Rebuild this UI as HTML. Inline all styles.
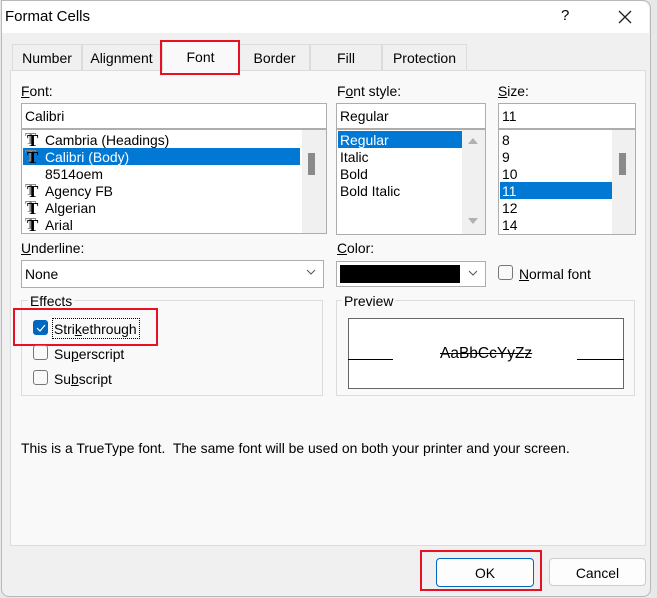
<!DOCTYPE html>
<html><head><style>
*{box-sizing:border-box;margin:0;padding:0}
body{width:657px;height:598px;background:#e8e8e8;font-family:"Liberation Sans",sans-serif;font-size:13.9px;color:#000;position:relative;overflow:hidden}
.a{position:absolute}
.win{left:1px;top:0;width:650px;height:597px;background:#f0f0f0;border:1px solid #b8b8b8;border-radius:0 8px 8px 8px}
.t{position:absolute;white-space:nowrap;line-height:16px}
.box{position:absolute;background:#fff;border:1px solid #adadad}
.sel{position:absolute;background:#0078d4}
.tab{position:absolute;top:44px;height:26px;border:1px solid #dcdcdc;border-bottom:none;background:#f0f0f0;text-align:center;line-height:27px;font-size:14px}
.red{position:absolute;border:2px solid #e81123}
.cb{position:absolute;width:15px;height:15px;border:1px solid #777;border-radius:3px;background:#f9f9f9}
.tt{position:absolute;font-family:"Liberation Serif",serif;font-weight:bold;font-size:17px;line-height:14px}
.tt b{position:absolute;left:-2px;top:-2px;color:#888;font-weight:bold}
.tt i{position:absolute;left:0;top:0;font-style:normal}
.grp{position:absolute;border:1px solid #dcdcdc}
u{text-decoration:underline}
</style></head><body>
<div class="a win"></div>
<div class="a" style="left:2px;top:1px;width:647px;height:32px;background:#fff;border-radius:0 8px 0 0"></div>
<div class="t" style="left:5px;top:9px;font-size:15px">Format Cells</div>
<div class="t" style="left:561px;top:8px;font-size:15px">?</div>
<svg class="a" style="left:618px;top:10px" width="14" height="14"><path d="M1 1L13 13M13 1L1 13" stroke="#222" stroke-width="1.3"/></svg>

<div class="tab" style="left:12px;width:70px">Number</div>
<div class="tab" style="left:82px;width:79px">Alignment</div>
<div class="tab" style="left:239px;width:71px">Border</div>
<div class="tab" style="left:310px;width:72px">Fill</div>
<div class="tab" style="left:382px;width:85px">Protection</div>
<div class="a" style="left:10px;top:70px;width:636px;height:476px;background:#f9f9f9;border:1px solid #dcdcdc"></div>
<div class="tab" style="left:162px;top:41px;width:77px;height:30px;background:#f9f9f9;line-height:31px">Font</div>
<div class="red" style="left:160px;top:40px;width:80px;height:35px"></div>

<div class="t" style="left:21px;top:83px"><u>F</u>ont:</div>
<div class="box" style="left:21px;top:103px;width:306px;height:26px"></div>
<div class="t" style="left:25px;top:108px">Calibri</div>
<div class="box" style="left:21px;top:129px;width:306px;height:105px"></div>
<div class="a" style="left:302px;top:130px;width:24px;height:103px;background:#f0f0f0"></div>
<div class="a" style="left:308px;top:153px;width:7px;height:22px;background:#8a8a8a"></div>
<div class="sel" style="left:23px;top:148px;width:277px;height:17px"></div>
<div class="tt" style="left:27px;top:134px"><b>T</b><i>T</i></div>
<div class="tt" style="left:27px;top:151px"><b>T</b><i>T</i></div>
<div class="tt" style="left:27px;top:185px"><b>T</b><i>T</i></div>
<div class="tt" style="left:27px;top:202px"><b>T</b><i>T</i></div>
<div class="tt" style="left:27px;top:219px"><b>T</b><i>T</i></div>
<div class="t" style="left:45px;top:132px">Cambria (Headings)</div>
<div class="t" style="left:45px;top:149px;color:#fff">Calibri (Body)</div>
<div class="t" style="left:45px;top:166px">8514oem</div>
<div class="t" style="left:45px;top:183px">Agency FB</div>
<div class="t" style="left:45px;top:200px">Algerian</div>
<div class="t" style="left:45px;top:217px">Arial</div>

<div class="t" style="left:337px;top:83px">F<u>o</u>nt style:</div>
<div class="box" style="left:336px;top:103px;width:150px;height:26px"></div>
<div class="t" style="left:340px;top:108px">Regular</div>
<div class="box" style="left:336px;top:129px;width:150px;height:106px"></div>
<div class="a" style="left:462px;top:130px;width:23px;height:104px;background:#f0f0f0"></div>
<svg class="a" style="left:468px;top:137px" width="10" height="90"><path d="M0 7L5 1L10 7Z M0 81L10 81L5 87Z" fill="#b0b0b0"/></svg>
<div class="sel" style="left:338px;top:131px;width:124px;height:17px"></div>
<div class="t" style="left:340px;top:132px;color:#fff">Regular</div>
<div class="t" style="left:340px;top:149px">Italic</div>
<div class="t" style="left:340px;top:166px">Bold</div>
<div class="t" style="left:340px;top:183px">Bold Italic</div>

<div class="t" style="left:498px;top:83px"><u>S</u>ize:</div>
<div class="box" style="left:498px;top:103px;width:138px;height:26px"></div>
<div class="t" style="left:502px;top:108px">11</div>
<div class="box" style="left:498px;top:129px;width:138px;height:106px"></div>
<div class="a" style="left:612px;top:130px;width:23px;height:104px;background:#f0f0f0"></div>
<div class="a" style="left:619px;top:153px;width:7px;height:22px;background:#8a8a8a"></div>
<div class="sel" style="left:500px;top:182px;width:112px;height:17px"></div>
<div class="t" style="left:502px;top:132px">8</div>
<div class="t" style="left:502px;top:149px">9</div>
<div class="t" style="left:502px;top:166px">10</div>
<div class="t" style="left:502px;top:183px;color:#fff">11</div>
<div class="t" style="left:502px;top:200px">12</div>
<div class="t" style="left:502px;top:217px">14</div>

<div class="t" style="left:21px;top:240px"><u>U</u>nderline:</div>
<div class="box" style="left:21px;top:260px;width:303px;height:28px"></div>
<div class="t" style="left:25px;top:266px">None</div>
<svg class="a" style="left:306px;top:269px" width="10" height="7"><path d="M1 1L5 5L9 1" stroke="#555" fill="none"/></svg>
<div class="t" style="left:337px;top:240px"><u>C</u>olor:</div>
<div class="box" style="left:336px;top:261px;width:150px;height:26px"></div>
<div class="a" style="left:340px;top:265px;width:120px;height:18px;background:#000"></div>
<svg class="a" style="left:468px;top:270px" width="10" height="7"><path d="M1 1L5 5L9 1" stroke="#555" fill="none"/></svg>
<div class="cb" style="left:498px;top:265px"></div>
<div class="t" style="left:519px;top:266px"><u>N</u>ormal font</div>

<div class="grp" style="left:21px;top:300px;width:302px;height:96px"></div>
<div class="t" style="left:28px;top:293px;background:#f9f9f9;padding:0 2px">Effects</div>
<div class="cb" style="left:33px;top:320px;background:#0067c0;border-color:#0067c0"></div>
<svg class="a" style="left:36px;top:324px" width="10" height="8"><path d="M1 4L4 7L9 1" stroke="#fff" fill="none" stroke-width="1.2"/></svg>
<div class="a" style="left:52px;top:318px;width:88px;height:21px;border:1px dotted #000"></div>
<div class="t" style="left:54px;top:321px">Stri<u>k</u>ethrough</div>
<div class="red" style="left:13px;top:308px;width:145px;height:38px"></div>
<div class="cb" style="left:33px;top:345px"></div>
<div class="t" style="left:54px;top:346px">Su<u>p</u>erscript</div>
<div class="cb" style="left:33px;top:370px"></div>
<div class="t" style="left:54px;top:371px">Su<u>b</u>script</div>

<div class="grp" style="left:336px;top:300px;width:299px;height:96px"></div>
<div class="t" style="left:342px;top:293px;background:#f9f9f9;padding:0 2px">Preview</div>
<div class="a" style="left:348px;top:318px;width:276px;height:71px;background:#fff;border:1px solid #666"></div>
<div class="a" style="left:348px;top:359px;width:45px;height:1px;background:#000"></div>
<div class="a" style="left:577px;top:359px;width:47px;height:1px;background:#000"></div>
<div class="t" style="left:440px;top:346px;font-size:15.5px;text-decoration:line-through">AaBbCcYyZz</div>

<div class="t" style="left:21px;top:440px">This is a TrueType font.&nbsp; The same font will be used on both your printer and your screen.</div>

<div class="a" style="left:436px;top:558px;width:98px;height:29px;background:#fdfdfd;border:1px solid #0067c0;border-radius:4px;text-align:center;line-height:28px">OK</div>
<div class="red" style="left:420px;top:550px;width:122px;height:41px"></div>
<div class="a" style="left:549px;top:558px;width:97px;height:28px;background:#fdfdfd;border:1px solid #ccc;border-radius:4px;text-align:center;line-height:28px">Cancel</div>
</body></html>
